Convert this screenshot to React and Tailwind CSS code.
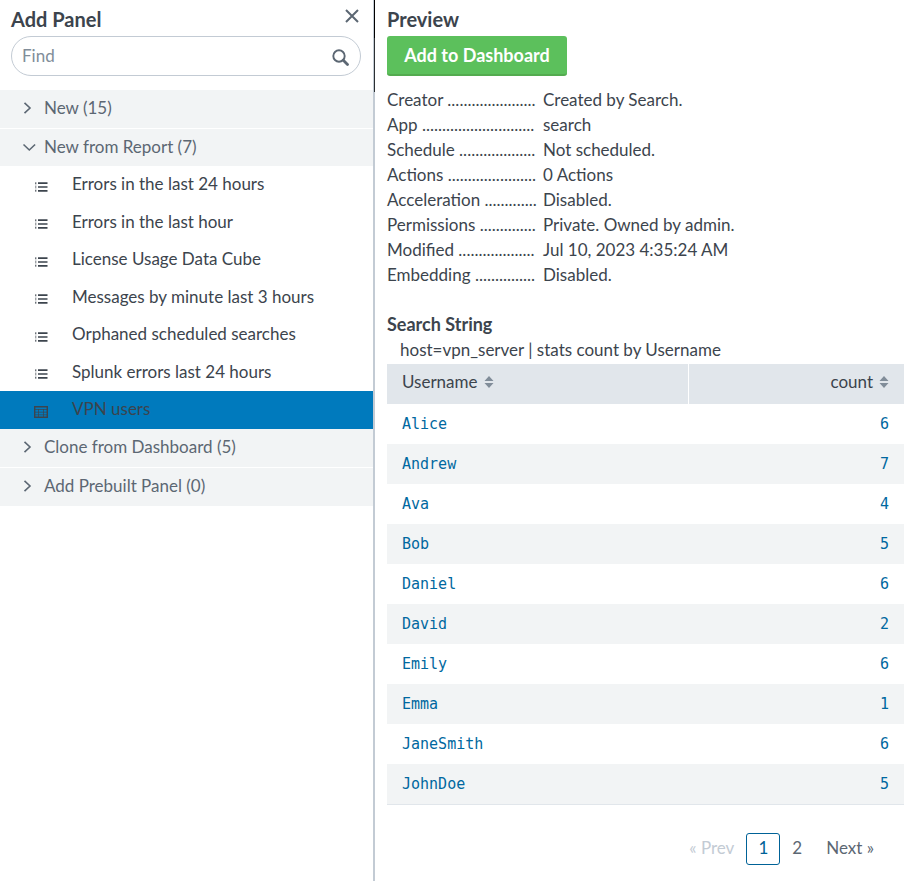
import React from "react";

const reports = [
  "Errors in the last 24 hours",
  "Errors in the last hour",
  "License Usage Data Cube",
  "Messages by minute last 3 hours",
  "Orphaned scheduled searches",
  "Splunk errors last 24 hours",
  "VPN users",
];

const details = [
  ["Creator", 22, "Created by Search."],
  ["App", 28, "search"],
  ["Schedule", 19, "Not scheduled."],
  ["Actions", 22, "0 Actions"],
  ["Acceleration", 13, "Disabled."],
  ["Permissions", 14, "Private. Owned by admin."],
  ["Modified", 19, "Jul 10, 2023 4:35:24 AM"],
  ["Embedding", 15, "Disabled."],
];

const users = [
  ["Alice", 6],
  ["Andrew", 7],
  ["Ava", 4],
  ["Bob", 5],
  ["Daniel", 6],
  ["David", 2],
  ["Emily", 6],
  ["Emma", 1],
  ["JaneSmith", 6],
  ["JohnDoe", 5],
];

function Chevron({ open }) {
  return (
    <svg aria-hidden="true" viewBox="0 0 14 14" className="h-[14px] w-[14px] shrink-0" fill="none" stroke="currentColor" strokeWidth="1.6">
      <path d={open ? "M1.5 4.5 7.300 10l5.800-5.500" : "M2.500 1.800 8 7l-5.500 5.200"} />
    </svg>
  );
}

function ListIcon() {
  return (
    <svg aria-hidden="true" viewBox="0 0 14 12" className="h-[12px] w-[14px] shrink-0" fill="currentColor">
      <path d="M1 1.500h1.400v1.200H1zM1 5.400h1.400v1.200H1zM1 9.300h1.400v1.200H1zM4 1.300h9.500v1.600H4zM4 5.200h9.500v1.600H4zM4 9.100h9.500v1.600H4z" />
      <path fillOpacity=".45" d="M1 3.500h1.400v1H1zM1 7.500h1.400v1H1z" />
    </svg>
  );
}

function TableIcon() {
  return (
    <svg aria-hidden="true" viewBox="0 0 14 12" className="h-[12px] w-[14px] shrink-0" fill="none" stroke="currentColor">
      <path strokeWidth="1.400" d="M.7.700h12.600v10.600H.7z" />
      <path strokeWidth=".7" d="M1 3.500h12M1 6.200h12M1 8.800h12M4.500 3v8M9.500 3v8" />
    </svg>
  );
}

function SortIcon() {
  return (
    <svg aria-hidden="true" viewBox="0 0 10 12" className="h-[12px] w-[10px]" fill="#818d99">
      <path d="M5 0 9.500 5H.5zM5 12 .5 7h9z" />
    </svg>
  );
}

function Section({ label, open, divided }) {
  return (
    <h3 className={divided ? "border-t border-white" : ""}>
      <button
        type="button"
        aria-expanded={Boolean(open)}
        className="flex h-[38px] w-full items-center gap-2 bg-[#f2f4f5] pb-[3px] pl-[22px] text-left text-[#5c6773]"
      >
        <Chevron open={open} />
        {label}
      </button>
    </h3>
  );
}

function AddPanel() {
  return (
    <aside className="w-[373px] shrink-0">
      <header className="flex h-9 items-center justify-between pl-[11px] pr-[13px]">
        <h2 className="pt-[2px] text-[20px] font-bold leading-6">Add Panel</h2>
        <button type="button" aria-label="Close" className="mb-1 text-[#5c6773]">
          <svg viewBox="0 0 16 16" className="h-4 w-4" fill="none" stroke="currentColor" strokeWidth="2">
            <path d="M2 2l12 12M14 2 2 14" />
          </svg>
        </button>
      </header>
      <div className="pl-[11px] pr-3">
        <div className="flex h-10 items-center rounded-full border border-[#c3cbd4] pl-[10px] pr-[11px]">
          <input type="text" aria-label="Find" placeholder="Find" className="h-full min-w-0 flex-1 bg-transparent pb-[2px] outline-none placeholder:text-[#818d99]" />
          <svg aria-hidden="true" viewBox="0 0 17 17" className="mt-[2px] h-[17px] w-[17px] text-[#5c6773]" fill="none" stroke="currentColor">
            <circle cx="7" cy="7" r="5.700" strokeWidth="1.900" />
            <path d="m11.300 11.300 4.200 4.200" strokeWidth="2.800" strokeLinecap="round" />
          </svg>
        </div>
      </div>
      <div className="mt-[14px] flex flex-col">
        <Section label="New (15)" />
        <Section label="New from Report (7)" open divided />
        <ul className="-mt-px">
          {reports.map((name) => {
            const selected = name === "VPN users";
            return (
              <li key={name} className="odd:h-[38px] even:h-[37px]">
                <a
                  href="#preview"
                  aria-current={selected ? "true" : undefined}
                  className={`flex h-full items-center gap-6 pl-[34px] ${selected ? "bg-[#007abd]" : "bg-white"}`}
                >
                  <span className="pt-[3px]">{selected ? <TableIcon /> : <ListIcon />}</span>
                  <span className="pb-[2px]">{name}</span>
                </a>
              </li>
            );
          })}
        </ul>
        <Section label="Clone from Dashboard (5)" />
        <Section label="Add Prebuilt Panel (0)" divided />
      </div>
    </aside>
  );
}

function Results() {
  return (
    <table className="mt-[2px] w-full border-collapse">
      <thead>
        <tr className="h-10 bg-[#e1e6eb]">
          <th scope="col" className="w-[301px] border-r border-white px-[15px] text-left font-normal">
            <button type="button" className="inline-flex items-center gap-[6px] pb-1">Username <SortIcon /></button>
          </th>
          <th scope="col" className="px-[15px] text-right font-normal">
            <button type="button" className="inline-flex items-center gap-[6px] pb-1">count <SortIcon /></button>
          </th>
        </tr>
      </thead>
      <tbody className="border-b border-[#e1e6eb] font-['DejaVu_Sans_Mono',monospace] text-[15px] text-[#0068a0]">
        {users.map(([name, count]) => (
          <tr key={name} className="h-10 even:bg-[#f2f4f5]">
            <td className="px-[15px]">{name}</td>
            <td className="px-[15px] text-right">{count}</td>
          </tr>
        ))}
      </tbody>
    </table>
  );
}

function Preview() {
  return (
    <main id="preview" className="min-w-0 flex-1 pl-3 pr-[6px]">
      <h2 className="flex h-9 items-center pt-[2px] text-[20px] font-bold">Preview</h2>
      <button type="button" className="h-10 w-[180px] rounded-[3px] border-b-2 border-[#53ab4f] bg-[#5cc05c] text-[18px] font-bold text-white">
        Add to Dashboard
      </button>
      <dl className="mt-[11px] leading-[25px]">
        {details.map(([term, dots, value]) => (
          <div key={term} className="flex">
            <dt className="w-[156px] shrink-0 whitespace-nowrap">
              {term} {".".repeat(dots)}
            </dt>
            <dd>{value}</dd>
          </div>
        ))}
      </dl>
      <h3 className="mt-[25px] text-[18px] font-bold leading-[25px]">Search String</h3>
      <p className="pl-[13px] leading-[25px]">host=vpn_server | stats count by Username</p>
      <Results />
      <nav aria-label="Pages" className="mt-7 flex h-8 items-center justify-end gap-3 pr-[30px] text-[#5c6773]">
        <button type="button" disabled className="pb-[2px] text-[#c3cbd4]">« Prev</button>
        <button type="button" aria-current="page" className="h-8 w-[34px] rounded-[3px] border border-[#006297] pb-[2px] text-[#006297]">1</button>
        <button type="button" className="pb-[2px]">2</button>
        <button type="button" className="pb-[2px] pl-3">Next »</button>
      </nav>
    </main>
  );
}

export default function App() {
  return (
    <div className="flex min-h-screen bg-white font-['Lato',sans-serif] text-[17px] text-[#3c444d]">
      <AddPanel />
      <div aria-hidden="true" className="w-[2px] shrink-0 bg-[#c3cbd4]">
        <div className="h-[38px] border-l border-[#c3cbd4] bg-black" />
        <div className="h-[54px] border-l border-[#c3cbd4] bg-[#2b3033]" />
      </div>
      <Preview />
    </div>
  );
}
